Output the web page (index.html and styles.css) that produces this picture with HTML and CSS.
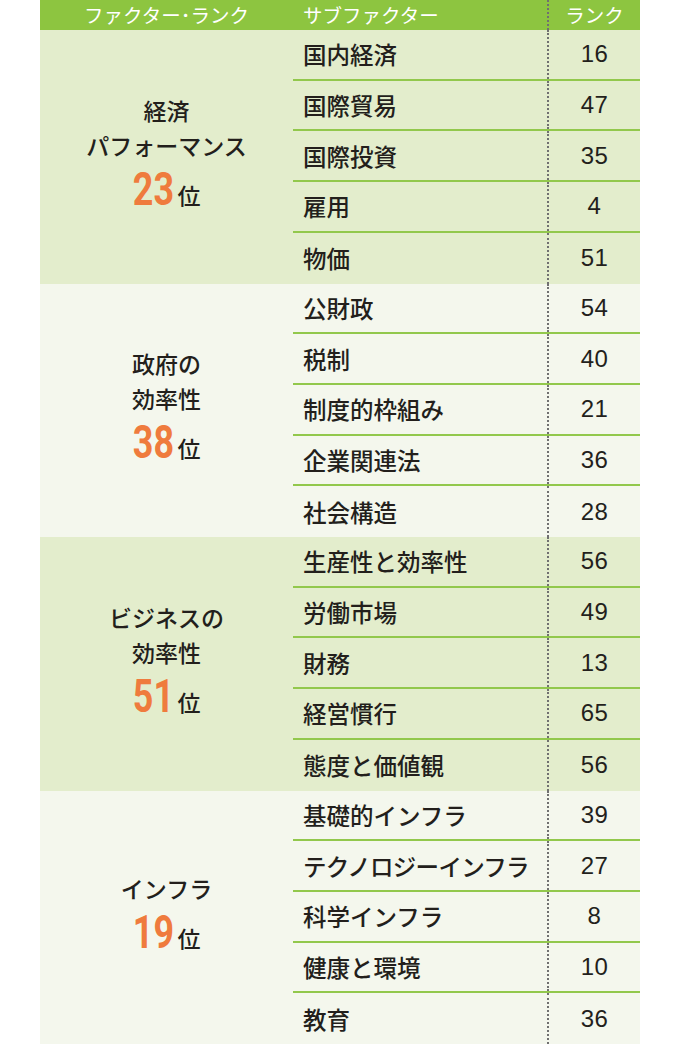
FILE: index.html
```html
<!DOCTYPE html>
<html lang="ja">
<head>
<meta charset="utf-8">
<title>ファクター・ランク</title>
<link rel="stylesheet" href="styles.css">
</head>
<body>
<div class="table">
  <div class="head">
    <div class="h-factor">ファクター･ランク</div>
    <div class="h-sub">サブファクター</div>
    <div class="h-rank">ランク</div>
  </div>

  <section class="block tint">
    <div class="factor">
      <div class="f-line">経済</div>
      <div class="f-line">パフォーマンス</div>
      <div class="f-rank"><span class="num">23</span><span class="pos">位</span></div>
    </div>
    <div class="rows">
      <div class="row"><span class="sub">国内経済</span><span class="rank">16</span></div>
      <div class="row"><span class="sub">国際貿易</span><span class="rank">47</span></div>
      <div class="row"><span class="sub">国際投資</span><span class="rank">35</span></div>
      <div class="row"><span class="sub">雇用</span><span class="rank">4</span></div>
      <div class="row"><span class="sub">物価</span><span class="rank">51</span></div>
    </div>
  </section>

  <section class="block pale">
    <div class="factor">
      <div class="f-line">政府の</div>
      <div class="f-line">効率性</div>
      <div class="f-rank"><span class="num">38</span><span class="pos">位</span></div>
    </div>
    <div class="rows">
      <div class="row"><span class="sub">公財政</span><span class="rank">54</span></div>
      <div class="row"><span class="sub">税制</span><span class="rank">40</span></div>
      <div class="row"><span class="sub">制度的枠組み</span><span class="rank">21</span></div>
      <div class="row"><span class="sub">企業関連法</span><span class="rank">36</span></div>
      <div class="row"><span class="sub">社会構造</span><span class="rank">28</span></div>
    </div>
  </section>

  <section class="block tint">
    <div class="factor">
      <div class="f-line">ビジネスの</div>
      <div class="f-line">効率性</div>
      <div class="f-rank"><span class="num">51</span><span class="pos">位</span></div>
    </div>
    <div class="rows">
      <div class="row"><span class="sub">生産性と効率性</span><span class="rank">56</span></div>
      <div class="row"><span class="sub">労働市場</span><span class="rank">49</span></div>
      <div class="row"><span class="sub">財務</span><span class="rank">13</span></div>
      <div class="row"><span class="sub">経営慣行</span><span class="rank">65</span></div>
      <div class="row"><span class="sub">態度と価値観</span><span class="rank">56</span></div>
    </div>
  </section>

  <section class="block pale">
    <div class="factor">
      <div class="f-line">インフラ</div>
      <div class="f-rank"><span class="num">19</span><span class="pos">位</span></div>
    </div>
    <div class="rows">
      <div class="row"><span class="sub">基礎的インフラ</span><span class="rank">39</span></div>
      <div class="row"><span class="sub kana">テクノロジーインフラ</span><span class="rank">27</span></div>
      <div class="row"><span class="sub">科学インフラ</span><span class="rank">8</span></div>
      <div class="row"><span class="sub">健康と環境</span><span class="rank">10</span></div>
      <div class="row"><span class="sub">教育</span><span class="rank">36</span></div>
    </div>
  </section>
</div>
</body>
</html>
```

FILE: styles.css
```css
html, body {
  margin: 0;
  padding: 0;
  background: #ffffff;
}

body {
  font-family: "Noto Sans CJK JP", "Noto Sans", sans-serif;
  color: #231f1c;
}

.table {
  width: 600px;
  margin-left: 40px;
}

.head {
  display: grid;
  grid-template-columns: 253px 254px 93px;
  height: 30px;
  background: #8dc540;
  color: #ffffff;
  font-size: 19.5px;
  line-height: 30px;
}

.h-factor {
  text-align: center;
}

.h-sub {
  padding-left: 10px;
}

.h-rank {
  text-align: center;
  border-left: 2px dotted #707070;
  box-sizing: border-box;
}

.block {
  display: grid;
  grid-template-columns: 253px 347px;
  height: 253.5px;
}

.tint {
  background: #e3edcc;
}

.pale {
  background: #f4f7ed;
}

.factor {
  display: flex;
  flex-direction: column;
  justify-content: center;
  align-items: center;
  font-size: 23px;
  font-weight: 500;
}

.f-line {
  line-height: 35px;
}

.f-rank {
  line-height: 52px;
  display: flex;
  align-items: baseline;
}

.num {
  display: inline-block;
  font-family: "Roboto", "Liberation Sans", sans-serif;
  font-weight: 700;
  font-size: 46px;
  color: #ef7b3d;
  transform: scaleX(0.78);
  margin: 0 -5px 0 -6px;
}

.pos {
  font-size: 23px;
  margin-left: 3px;
}

.rows {
  display: grid;
  grid-template-rows: repeat(5, 1fr);
}

.row {
  display: grid;
  grid-template-columns: 254px 93px;
  align-items: center;
  border-bottom: 2px solid #92c84c;
  box-sizing: border-box;
}

.row:last-child {
  border-bottom: none;
}

.sub {
  padding-left: 10px;
  font-size: 23.5px;
  font-weight: 500;
}

.kana {
  letter-spacing: -0.7px;
}

.rank {
  align-self: stretch;
  display: flex;
  align-items: center;
  justify-content: center;
  border-left: 2px dotted #707070;
  font-family: "Liberation Sans", Arial, sans-serif;
  font-size: 24px;
  letter-spacing: 0.5px;
}
```
